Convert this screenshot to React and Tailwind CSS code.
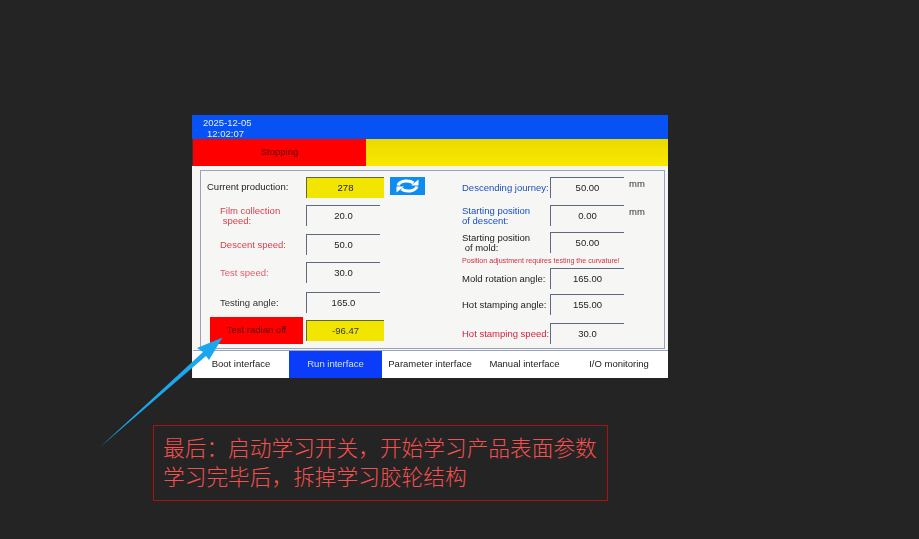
const leftRows = [
  { label: ["Film collection", "\u00a0speed:"], value: "20.0", color: "text-[#d8404a]", mt: "mt-[7px]" },
  { label: ["Descent speed:"], value: "50.0", color: "text-[#d8404a]", mt: "mt-[8px]" },
  { label: ["Test speed:"], value: "30.0", color: "text-[#e0606a]", mt: "mt-[7px]" },
  { label: ["Testing angle:"], value: "165.0", color: "text-[#333]", mt: "mt-[9px]" },
];

const rightTop = [
  { label: ["Descending journey:"], value: "50.00", unit: "mm", color: "text-[#1a4fc0]", mt: "mt-0" },
  { label: ["Starting position", "of descent:"], value: "0.00", unit: "mm", color: "text-[#1a4fc0]", mt: "mt-[7px]" },
  { label: ["Starting position", "\u00a0of mold:"], value: "50.00", color: "text-[#222]", mt: "mt-[6px]" },
];

const rightBottom = [
  { label: ["Mold rotation angle:"], value: "165.00", color: "text-[#222]", mt: "mt-0" },
  { label: ["Hot stamping angle:"], value: "155.00", color: "text-[#222]", mt: "mt-[5px]" },
  { label: ["Hot stamping speed:"], value: "30.0", color: "text-[#d81e3c]", mt: "mt-[8px]" },
];

const tabs = [
  { name: "Boot interface", w: "w-[96px]" },
  { name: "Run interface", w: "w-[93px]" },
  { name: "Parameter interface", w: "w-[96px]" },
  { name: "Manual interface", w: "w-[93px]" },
  { name: "I/O monitoring", w: "w-[96px]" },
];

function Field({ value }) {
  return (
    <div className="w-[74px] h-[21px] shrink-0 flex items-center justify-center border-t border-l border-[#5f6a82] text-[#222]">
      {value}
    </div>
  );
}

function Label({ lines, color, className }) {
  return (
    <div className={`leading-[10px] ${color} ${className}`}>
      {lines.map((line) => (
        <div key={line} className="whitespace-nowrap">{line}</div>
      ))}
    </div>
  );
}

function RightRow({ row }) {
  return (
    <div className={`flex items-center h-[21px] ${row.mt}`}>
      <Label lines={row.label} color={row.color} className="w-[88px] shrink-0" />
      <Field value={row.value} />
      {row.unit && <span className="ml-[5px] self-start text-[#333]">{row.unit}</span>}
    </div>
  );
}

function RefreshIcon() {
  return (
    <svg width="23" height="14" viewBox="0 0 23 14" fill="none">
      <path d="M2 6.5C4 1.5 13 0.5 17.5 4" stroke="white" strokeWidth="3" />
      <polygon points="22.5,0.5 22.5,6.5 15,6.5" fill="white" />
      <path d="M21 7.5C19 12.5 10 13.5 5.5 10" stroke="white" strokeWidth="3" />
      <polygon points="0.5,13.5 0.5,7.5 8,7.5" fill="white" />
    </svg>
  );
}

export default function App() {
  return (
    <div className="relative w-[919px] h-[539px] overflow-hidden bg-[#242424] pt-[115px] pl-[192px] font-['Liberation_Sans',sans-serif]">
      <div className="w-[476px] h-[263px] flex flex-col bg-[#f6f6f5] text-[9.5px] blur-[0.35px]">
        {/* header */}
        <div className="h-[24px] bg-[#0652f4] pl-[11px] pt-[3px] text-[9.5px] leading-[10px] text-[#e4ecff]">
          <div>2025-12-05</div>
          <div className="pl-[4px] mt-px">12:02:07</div>
        </div>

        <div className="h-[27px] flex pl-[1px] bg-[#333]">
          <div className="w-[173px] flex items-center justify-center bg-[#fe0000] text-[#5a0a0a]">Stopping</div>
          <div className="flex-1 bg-gradient-to-b from-[#ead900] to-[#fae800]" />
        </div>

        {/* main panel */}
        <div className="h-[179px] mt-[4px] ml-[8px] w-[465px] flex border border-[#9aa2bc] pt-[6px]">
          <div className="w-[261px] pl-[6px]">
            <div className="flex items-center h-[21px]">
              <span className="w-[99px] shrink-0 text-[#222]">Current production:</span>
              <div className="w-[78px] h-[21px] flex items-center justify-center bg-[#f2e600] border-t border-l border-[#5f6a30] text-[#222]">278</div>
              <div className="w-[35px] h-[18px] ml-[6px] self-start flex items-center justify-center bg-[#0f8cf0]">
                <RefreshIcon />
              </div>
            </div>
            {leftRows.map((row) => (
              <div key={row.value} className={`flex items-center h-[21px] ${row.mt}`}>
                <Label lines={row.label} color={row.color} className="w-[99px] shrink-0 pl-[13px]" />
                <Field value={row.value} />
              </div>
            ))}
            <div className="flex items-center mt-[4px] h-[27px] pl-[3px]">
              <div className="w-[93px] h-[27px] shrink-0 flex items-center justify-center bg-[#fe0000] text-[#5a0a0a]">Test radian off</div>
              <div className="w-[78px] h-[21px] ml-[3px] flex items-center justify-center bg-[#f2e600] border-t border-l border-[#5f6a30] text-[#333]">-96.47</div>
            </div>
          </div>

          <div className="flex-1">
            {rightTop.map((row) => (
              <RightRow key={row.value + row.label[0]} row={row} />
            ))}
            <div className="h-[15px] mt-[1px] -mb-[1px] flex items-center text-[7.1px] text-[#d23040] whitespace-nowrap">
              Position adjustment requires testing the curvature!
            </div>
            {rightBottom.map((row) => (
              <RightRow key={row.value} row={row} />
            ))}
          </div>
        </div>

        {/* bottom tabs */}
        <div className="flex-1 mt-[1px] ml-[1px] flex border-t border-[#9aa2bc] bg-white">
          {tabs.map((tab, i) => (
            <div
              key={tab.name}
              className={`${tab.w} flex items-center justify-center whitespace-nowrap ${i === 1 ? "bg-[#0a3cfa] text-[#cfe0ff]" : "text-[#222]"}`}
            >
              {tab.name}
            </div>
          ))}
        </div>
      </div>

      {/* callout */}
      <div className="w-[455px] h-[76px] mt-[47px] ml-[-39px] border border-[#a81212] pl-[9px] pt-[6px] text-[21.7px] leading-[29px] text-[#f65050] font-light font-['Noto_Sans_CJK_SC',sans-serif]">
        <div className="whitespace-nowrap">最后：启动学习开关，开始学习产品表面参数</div>
        <div className="whitespace-nowrap">学习完毕后，拆掉学习胶轮结构</div>
      </div>

      {/* arrow over the screenshot */}
      <svg className="absolute left-0 top-0 pointer-events-none" width="919" height="539" viewBox="0 0 919 539">
        <polygon points="99,448 203,352 197,348 222.5,337.5 209,360 206,356" fill="#1aa7ee" />
      </svg>
    </div>
  );
}
